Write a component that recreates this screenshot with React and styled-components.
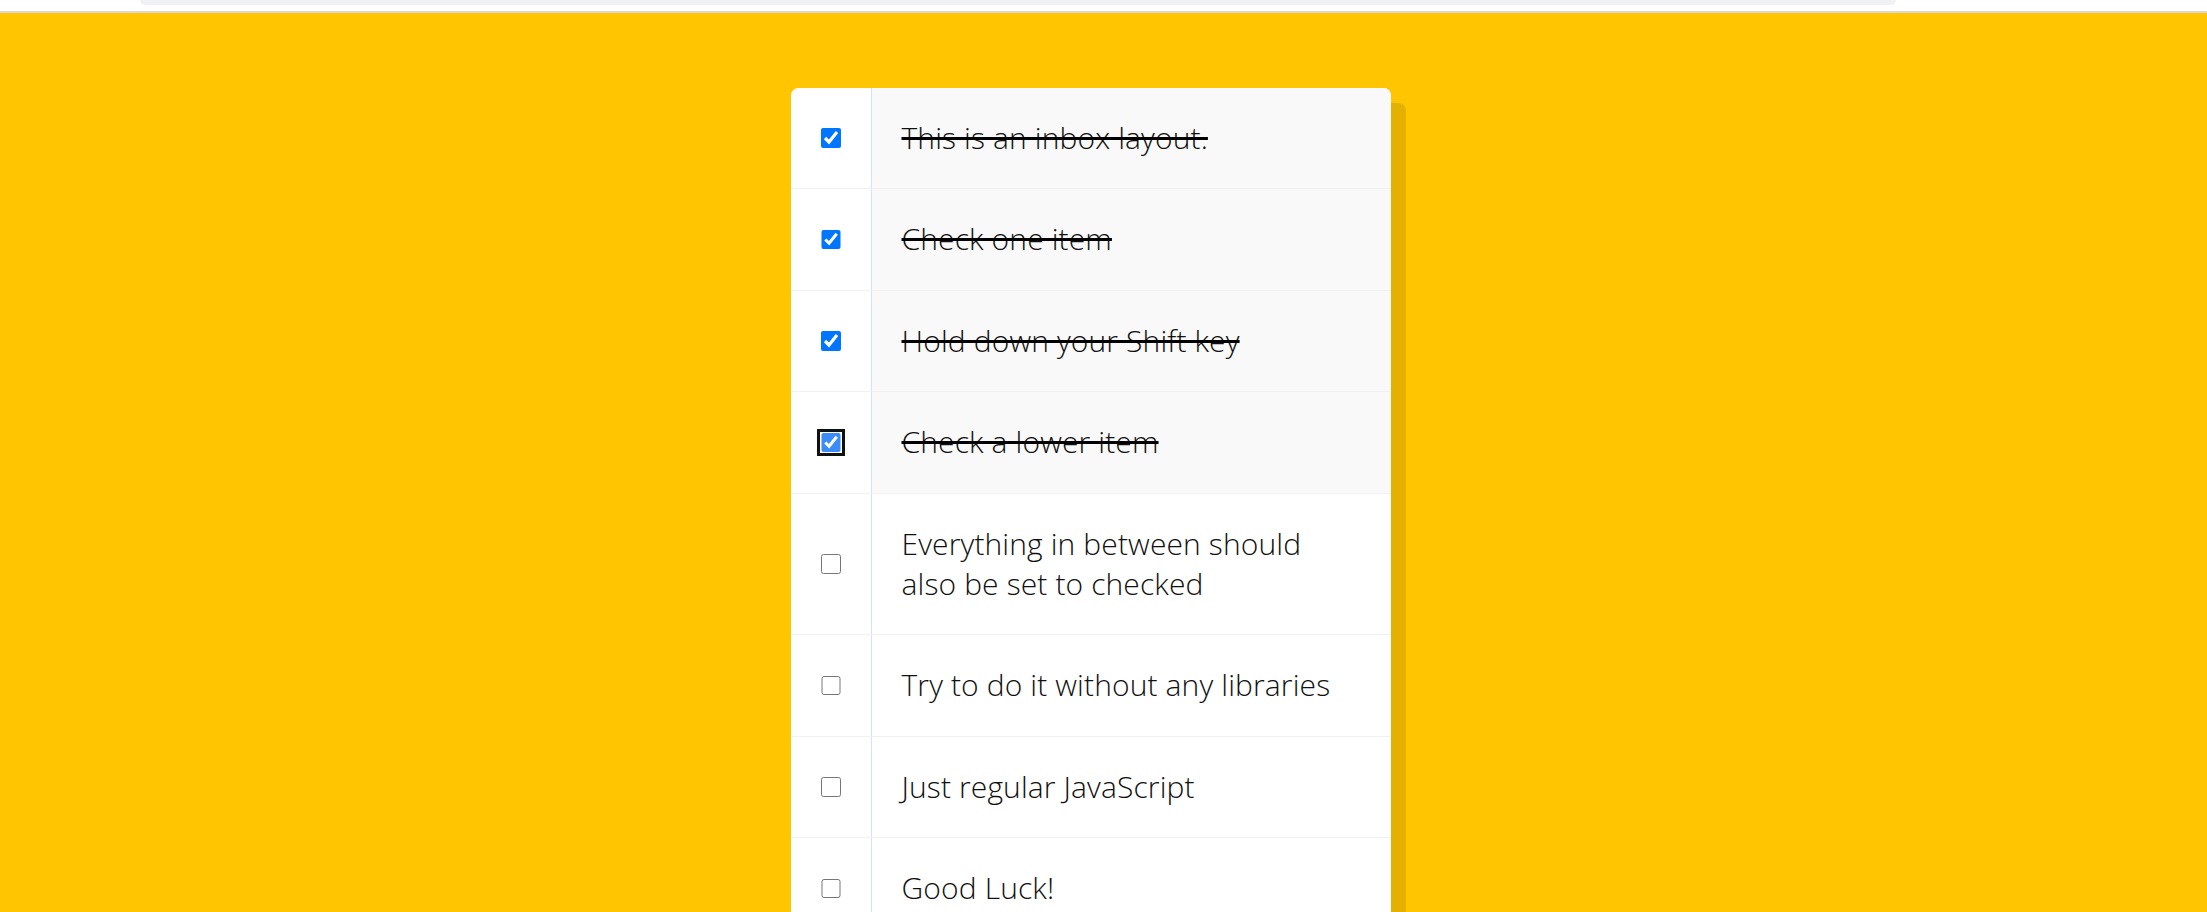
import React, { useState, useRef } from "react";
import styled, { createGlobalStyle } from "styled-components";

const GlobalStyle = createGlobalStyle`
  html { background: #ffc600; }
  body { margin: 0; font-family: "Open Sans", "Noto Sans", sans-serif; }
`;

const TopBar = styled.div`
  height: 11px;
  background: #ffffff;
  border-bottom: 2px solid #d9d9db;
  display: flex;
  padding-left: 140px;
  padding-right: 311px;
`;

const AddressEdge = styled.div`
  flex: 1;
  height: 5px;
  background: #f0f1f4;
  border-radius: 0 0 10px 10px;
`;

const Page = styled.main`
  display: flex;
  justify-content: center;
  padding-right: 25px;
`;

const Inbox = styled.div`
  width: 600px;
  margin: 75px 0;
  background: #ffffff;
  border-radius: 7.5px;
  box-shadow: 15px 15px 0 rgba(0, 0, 0, 0.1);
  overflow: hidden;
`;

const Item = styled.div`
  display: flex;
  align-items: center;
  border-bottom: 1px solid #f1f1f1;
  &:last-child { border-bottom: 0; }
`;

const Check = styled.input`
  width: 19.5px;
  height: 19.5px;
  margin: 30px;
  flex: none;
  border-radius: 4px;
  accent-color: ${(p) => (p.$focused ? "#3b8cf7" : "#0075ff")};
  outline: ${(p) => (p.$focused ? "3px solid #111111" : "none")};
  outline-offset: 1px;
`;

const Text = styled.p`
  margin: 0;
  padding: 30px;
  flex: 1;
  font-family: "Open Sans", "Noto Sans", sans-serif;
  font-size: 30px;
  font-weight: 300;
  line-height: 40.4px;
  letter-spacing: 0.12px;
  color: #111111;
  border-left: 1px solid #d1e2ff;
  background: ${(p) => (p.$checked ? "#f9f9f9" : "#ffffff")};
  text-decoration: ${(p) => (p.$checked ? "line-through" : "none")};
  text-decoration-thickness: 3px;
  text-decoration-color: #000000;
`;

const items = [
  "This is an inbox layout.",
  "Check one item",
  "Hold down your Shift key",
  "Check a lower item",
  "Everything in between should also be set to checked",
  "Try to do it without any libraries",
  "Just regular JavaScript",
  "Good Luck!",
];

export default function App() {
  const [checked, setChecked] = useState([true, true, true, true, false, false, false, false]);
  const last = useRef(3);

  const onClick = (i, e) => {
    const next = [...checked];
    const value = !checked[i];
    if (e.shiftKey && value && last.current !== null) {
      const [a, b] = [Math.min(i, last.current), Math.max(i, last.current)];
      for (let k = a; k <= b; k++) next[k] = true;
    } else {
      next[i] = value;
    }
    last.current = i;
    setChecked(next);
  };

  return (
    <>
      <GlobalStyle />
      <TopBar>
        <AddressEdge />
      </TopBar>
      <Page>
        <Inbox>
          {items.map((t, i) => (
            <Item key={i}>
              <Check
                type="checkbox"
                checked={checked[i]}
                $focused={i === 3}
                onChange={() => {}}
                onClick={(e) => onClick(i, e)}
              />
              <Text $checked={checked[i]}>{t}</Text>
            </Item>
          ))}
        </Inbox>
      </Page>
    </>
  );
}
